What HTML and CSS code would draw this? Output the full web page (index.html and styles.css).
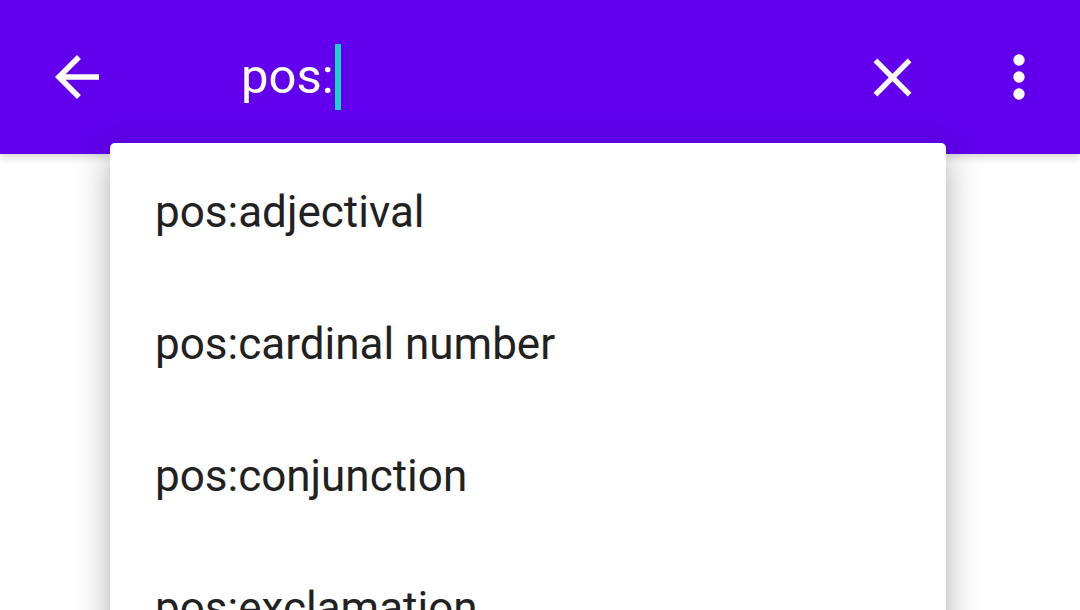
FILE: index.html
```html
<!DOCTYPE html>
<html>
<head>
<meta charset="utf-8">
<link rel="stylesheet" href="styles.css">
</head>
<body>
<header class="toolbar">
  <div class="icon-btn back">
    <svg viewBox="0 0 24 24" width="66" height="66"><path fill="#fff" d="M20 11H7.83l5.59-5.59L12 4l-8 8 8 8 1.41-1.41L7.83 13H20v-2z"/></svg>
  </div>
  <div class="search">
    <span class="query">pos:</span><span class="cursor"></span>
  </div>
  <div class="icon-btn close">
    <svg viewBox="0 0 24 24" width="65" height="65"><path fill="#fff" d="M19 6.41L17.59 5 12 10.59 6.41 5 5 6.41 10.59 12 5 17.59 6.41 19 12 13.41 17.59 19 19 17.59 13.41 12z"/></svg>
  </div>
  <div class="icon-btn more">
    <svg viewBox="0 0 24 24" width="68" height="68"><circle cx="12" cy="6" r="2" fill="#fff"/><circle cx="12" cy="12" r="2" fill="#fff"/><circle cx="12" cy="18" r="2" fill="#fff"/></svg>
  </div>
</header>
<main class="content"></main>
<ul class="dropdown">
  <li class="item">pos:adjectival</li>
  <li class="item">pos:cardinal number</li>
  <li class="item">pos:conjunction</li>
  <li class="item">pos:exclamation</li>
</ul>
</body>
</html>
```
FILE: styles.css
```css
html, body {
  margin: 0;
  padding: 0;
  width: 1080px;
  height: 610px;
  overflow: hidden;
  background: #fff;
  font-family: Roboto, "Noto Sans", sans-serif;
}
.toolbar {
  position: relative;
  z-index: 1;
  height: 154px;
  background: #6200ee;
  display: flex;
  align-items: center;
  padding-left: 44px;
  padding-right: 27px;
  box-sizing: border-box;
  box-shadow: 0 3px 8px rgba(0,0,0,0.18);
}
.icon-btn {
  display: flex;
  align-items: center;
  justify-content: center;
}
.icon-btn svg { display: block; }
.search {
  flex: 1;
  margin-left: 131px;
  display: flex;
  align-items: center;
  height: 66px;
}
.query {
  color: #fff;
  font-size: 49px;
  line-height: 66px;
}
.cursor {
  display: inline-block;
  width: 6px;
  height: 66px;
  margin-left: 1px;
  background: #1cd3c4;
}
.close { margin-right: 60px; }
.content {
  height: 456px;
  background: #fff;
}
.dropdown {
  position: absolute;
  z-index: 2;
  left: 110px;
  top: 143px;
  width: 836px;
  height: 520px;
  margin: 0;
  padding: 3px 0 0 0;
  list-style: none;
  background: #fff;
  border-radius: 5px;
  box-shadow: 0 22px 28px 3px rgba(0,0,0,0.14), 0 8px 38px 6px rgba(0,0,0,0.12), 0 14px 14px -8px rgba(0,0,0,0.2);
}
.item {
  height: 132px;
  line-height: 132px;
  padding-left: 45px;
  font-size: 44px;
  color: #212121;
  white-space: nowrap;
}
```
